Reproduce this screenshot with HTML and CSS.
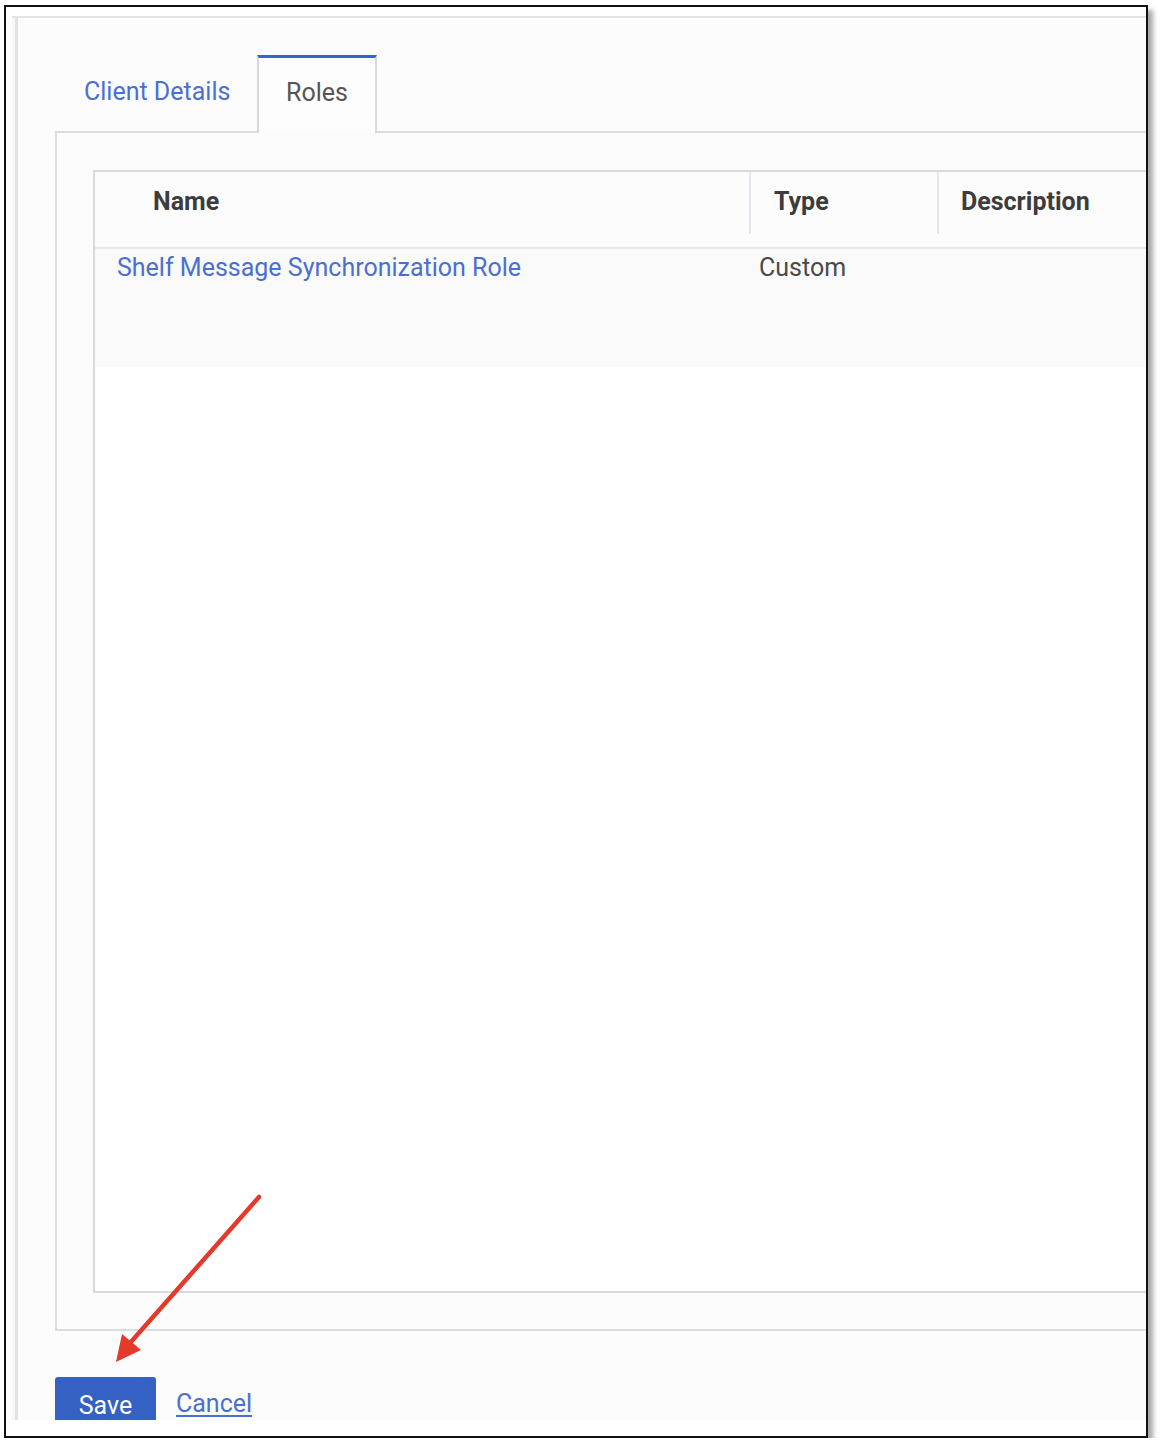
FILE: index.html
```html
<!DOCTYPE html>
<html>
<head>
<meta charset="utf-8">
<link rel="stylesheet" href="styles.css">
</head>
<body>
<div class="frame">
  <div class="app">
    <div class="app-inner">
      <div class="tabs">
        <div class="tab">Client Details</div>
        <div class="tab active">Roles</div>
      </div>
      <div class="panel">
        <div class="table">
          <div class="thead">
            <div class="th th-name">Name</div>
            <div class="th th-type">Type</div>
            <div class="th th-desc">Description</div>
          </div>
          <div class="row">
            <div class="td td-name"><a class="link" href="#">Shelf Message Synchronization Role</a></div>
            <div class="td td-type">Custom</div>
            <div class="td td-desc"></div>
          </div>
          <div class="tbody-empty"></div>
        </div>
      </div>
      <div class="actions">
        <button class="btn-save">Save</button>
        <a class="cancel" href="#">Cancel</a>
      </div>
    </div>
  </div>
  <svg class="arrow" width="180" height="190" viewBox="0 0 180 190">
    <line x1="153" y1="9" x2="24" y2="155" stroke="#e5392c" stroke-width="4.5" stroke-linecap="round"/>
    <polygon points="10,174 16,146 35,162" fill="#e5392c"/>
  </svg>
</div>
</body>
</html>
```
FILE: styles.css
```css
html, body {
  margin: 0;
  padding: 0;
  background: #ffffff;
}
body {
  font-family: Roboto, "Liberation Sans", Arial, sans-serif;
}
.frame {
  position: relative;
  margin: 5px 0 0 4px;
  width: 1140px;
  height: 1429px;
  border: 2px solid #111111;
  background: #ffffff;
  overflow: hidden;
  box-shadow: 5px 5px 5px rgba(0, 0, 0, 0.35);
}
.app {
  box-sizing: border-box;
  margin: 9px 0 0 6px;
  height: 1404px;
  border-top: 2px solid #e4e4e4;
  background: #f7f7f7;
  overflow: hidden;
}
.app-inner {
  margin-left: 3px;
  height: 100%;
  border-left: 3px solid #e2e2e2;
  background: #fcfcfc;
  padding-top: 37px;
  box-sizing: border-box;
}
.tabs {
  display: flex;
  margin-left: 37px;
  width: 1200px;
  border-bottom: 2px solid #dcdcdc;
}
.tab {
  box-sizing: border-box;
  height: 78px;
  margin-bottom: -2px;
  padding: 0 26px 6px 29px;
  display: flex;
  align-items: center;
  font-size: 25px;
  color: #4a6fd3;
  width: 202px;
  white-space: nowrap;
}
.tab.active {
  width: 120px;
  justify-content: center;
  padding: 0 0 6px 0;
  color: #555555;
  background: #fdfdfd;
  border-top: 3px solid #3a62c7;
  border-left: 2px solid #d8d8d8;
  border-right: 2px solid #d8d8d8;
}
.panel {
  box-sizing: border-box;
  margin-left: 37px;
  width: 1200px;
  height: 1198px;
  border-left: 2px solid #dcdcdc;
  border-bottom: 2px solid #dcdcdc;
  padding: 37px 0 36px 36px;
  display: flex;
}
.table {
  flex: 1;
  display: flex;
  flex-direction: column;
  border: 2px solid #dadada;
  background: #ffffff;
}
.thead {
  display: flex;
  height: 62px;
  padding-bottom: 13px;
  box-sizing: content-box;
  border-bottom: 2px solid #e6eaee;
  background: #fcfcfc;
}
.th {
  box-sizing: border-box;
  height: 62px;
  display: flex;
  align-items: center;
  padding-bottom: 4px;
  font-size: 25px;
  font-weight: 700;
  color: #3c3c3c;
  white-space: nowrap;
}
.th-name {
  width: 656px;
  padding-left: 58px;
  border-right: 2px solid #e5e9ee;
}
.th-type {
  width: 188px;
  padding-left: 23px;
  border-right: 2px solid #e5e9ee;
}
.th-desc {
  padding-left: 22px;
}
.row {
  display: flex;
  height: 118px;
  background: #fafafa;
}
.td {
  box-sizing: border-box;
  padding-top: 4px;
  font-size: 25px;
  line-height: 30px;
  color: #4a4a4a;
  white-space: nowrap;
}
.td-name {
  width: 658px;
  padding-left: 22px;
}
.td-type {
  width: 188px;
  padding-left: 6px;
}
.link {
  color: #4a6fd3;
  text-decoration: none;
}
.tbody-empty {
  flex: 1;
  background: #ffffff;
}
.actions {
  display: flex;
  align-items: flex-start;
  margin: 46px 0 0 37px;
  gap: 20px;
}
.btn-save {
  width: 101px;
  height: 52px;
  border: none;
  border-radius: 3px;
  background: #3560c4;
  color: #ffffff;
  font-family: Roboto, "Liberation Sans", Arial, sans-serif;
  font-size: 25px;
  padding: 4px 0 0 0;
  display: flex;
  justify-content: center;
  align-items: center;
}
.cancel {
  margin-top: 12px;
  font-size: 25px;
  line-height: 30px;
  color: #4a6fd3;
  text-decoration: underline;
  text-underline-offset: 3px;
}
.arrow {
  position: absolute;
  left: 100px;
  top: 1181px;
}
```
